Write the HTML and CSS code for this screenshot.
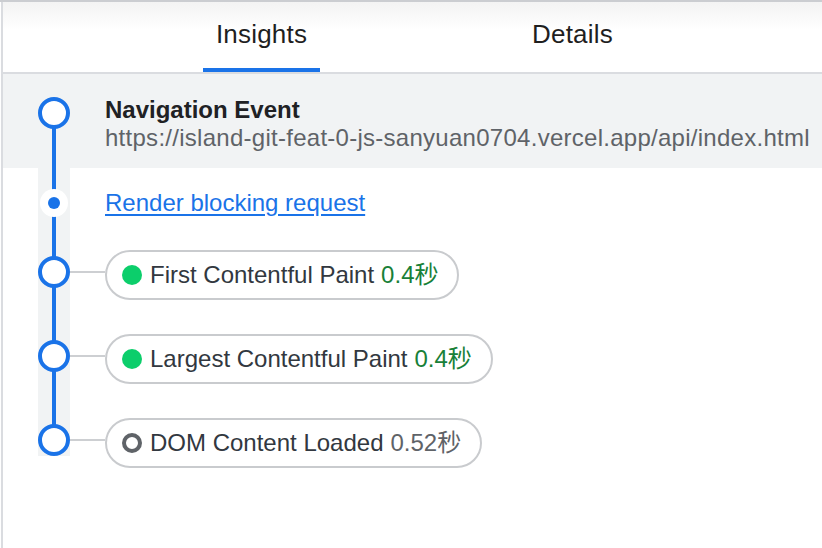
FILE: index.html
```html
<!DOCTYPE html>
<html lang="en">
<head>
<meta charset="utf-8">
<title>Insights</title>
<link rel="stylesheet" href="styles.css">
</head>
<body>
<div class="panel">
  <div class="pane">
    <div class="tabs">
      <div class="tab active"><span class="tab-label">Insights</span></div>
      <div class="tab"><span class="tab-label">Details</span></div>
    </div>
    <div class="timeline">
      <div class="nav-row">
        <div class="gutter gutter-top"><span class="ring"></span></div>
        <div class="nav-text">
          <div class="nav-title">Navigation Event</div>
          <div class="nav-url">https://island-git-feat-0-js-sanyuan0704.vercel.app/api/index.html</div>
        </div>
      </div>
      <div class="events">
        <div class="row row-link">
          <div class="gutter"><span class="dot-marker"><span class="dot-core"></span></span></div>
          <a class="link" href="#">Render blocking request</a>
        </div>
        <div class="row">
          <div class="gutter"><span class="ring"></span><span class="connector"></span></div>
          <div class="pill"><span class="status good"></span><span class="label">First Contentful Paint</span><span class="value good-text">0.4秒</span></div>
        </div>
        <div class="row">
          <div class="gutter"><span class="ring"></span><span class="connector"></span></div>
          <div class="pill"><span class="status good"></span><span class="label">Largest Contentful Paint</span><span class="value good-text">0.4秒</span></div>
        </div>
        <div class="row">
          <div class="gutter"><span class="ring"></span><span class="connector"></span></div>
          <div class="pill"><span class="status neutral"></span><span class="label">DOM Content Loaded</span><span class="value neutral-text">0.52秒</span></div>
        </div>
      </div>
    </div>
  </div>
</div>
</body>
</html>
```

FILE: styles.css
```css
html, body {
  margin: 0;
  padding: 0;
  background: #ffffff;
}

body {
  width: 822px;
  height: 548px;
  overflow: hidden;
  font-family: "Liberation Sans", Arial, "Noto Sans CJK SC", sans-serif;
}

.panel {
  height: 548px;
  box-sizing: border-box;
  border-top: 2px solid #cbcdd1;
  padding-left: 1px;
}

.pane {
  height: 100%;
  border-left: 2px solid #dadce0;
}

/* Tabs */
.tabs {
  display: flex;
  padding-left: 103px;
  height: 72px;
  box-sizing: border-box;
  border-bottom: 2px solid #dadce0;
  background: linear-gradient(#f3f3f3, #ffffff 28px);
}

.tab {
  flex: 0 0 311px;
  display: flex;
  justify-content: center;
  align-items: flex-start;
}

.tab-label {
  display: block;
  padding: 17px 12.5px 19px;
  font-size: 26px;
  line-height: 30px;
  color: #1f1f1f;
  letter-spacing: 0.2px;
  border-bottom: 4px solid transparent;
}

.tab.active .tab-label {
  border-bottom-color: #1a73e8;
}

/* Timeline */
.timeline {
  position: relative;
}

.timeline::before {
  content: "";
  position: absolute;
  left: 49px;
  top: 39px;
  width: 4px;
  height: 327px;
  background: #1a73e8;
}

.gutter {
  flex: 0 0 102px;
  display: flex;
  align-items: center;
}

.ring {
  position: relative;
  flex: 0 0 auto;
  width: 32px;
  height: 32px;
  margin-left: 35px;
  box-sizing: border-box;
  border: 4px solid #1a73e8;
  border-radius: 50%;
  background: #ffffff;
}

.connector {
  flex: 1;
  height: 2px;
  background: #cdcfd2;
}

.nav-row {
  display: flex;
  background: #f1f3f4;
  height: 94px;
  box-sizing: border-box;
  padding: 22px 0 16px;
}

.gutter-top {
  align-items: flex-start;
  padding-top: 1px;
}

.nav-title {
  font-size: 24px;
  line-height: 28px;
  font-weight: bold;
  color: #202124;
}

.nav-url {
  font-size: 24px;
  line-height: 28px;
  color: #5f6368;
  letter-spacing: 0.27px;
  white-space: nowrap;
}

.events {
  height: 306px;
  background: linear-gradient(#f1f3f4, #f1f3f4) no-repeat 35px 0 / 32px 288px;
}

.row {
  display: flex;
  align-items: center;
  height: 68px;
  margin-top: 16px;
}

.row-link {
  height: 70px;
  margin-top: 0;
}

.row-link + .row {
  margin-top: 0;
}

.dot-marker {
  position: relative;
  width: 28px;
  height: 28px;
  margin-left: 37px;
  border-radius: 50%;
  background: #ffffff;
  display: flex;
  align-items: center;
  justify-content: center;
}

.dot-core {
  width: 12px;
  height: 12px;
  border-radius: 50%;
  background: #1a73e8;
}

.link {
  font-size: 24px;
  line-height: 28px;
  color: #1a73e8;
  text-decoration: underline;
  text-underline-offset: 3px;
}

.pill {
  display: flex;
  align-items: center;
  height: 50px;
  margin-top: 5px;
  box-sizing: border-box;
  padding: 0 19px 0 15px;
  border: 2px solid #c9cbce;
  border-radius: 26px;
  font-size: 24px;
  line-height: 28px;
  white-space: nowrap;
}

.status {
  flex: 0 0 auto;
  width: 20px;
  height: 20px;
  box-sizing: border-box;
  border-radius: 50%;
  margin-right: 8px;
}

.status.good {
  background: #0cce6b;
}

.status.neutral {
  border: 4px solid #5f6368;
}

.label {
  color: #323840;
}

.value {
  margin-left: 7px;
}

.good-text {
  color: #188038;
}

.neutral-text {
  color: #5f6368;
}
```
